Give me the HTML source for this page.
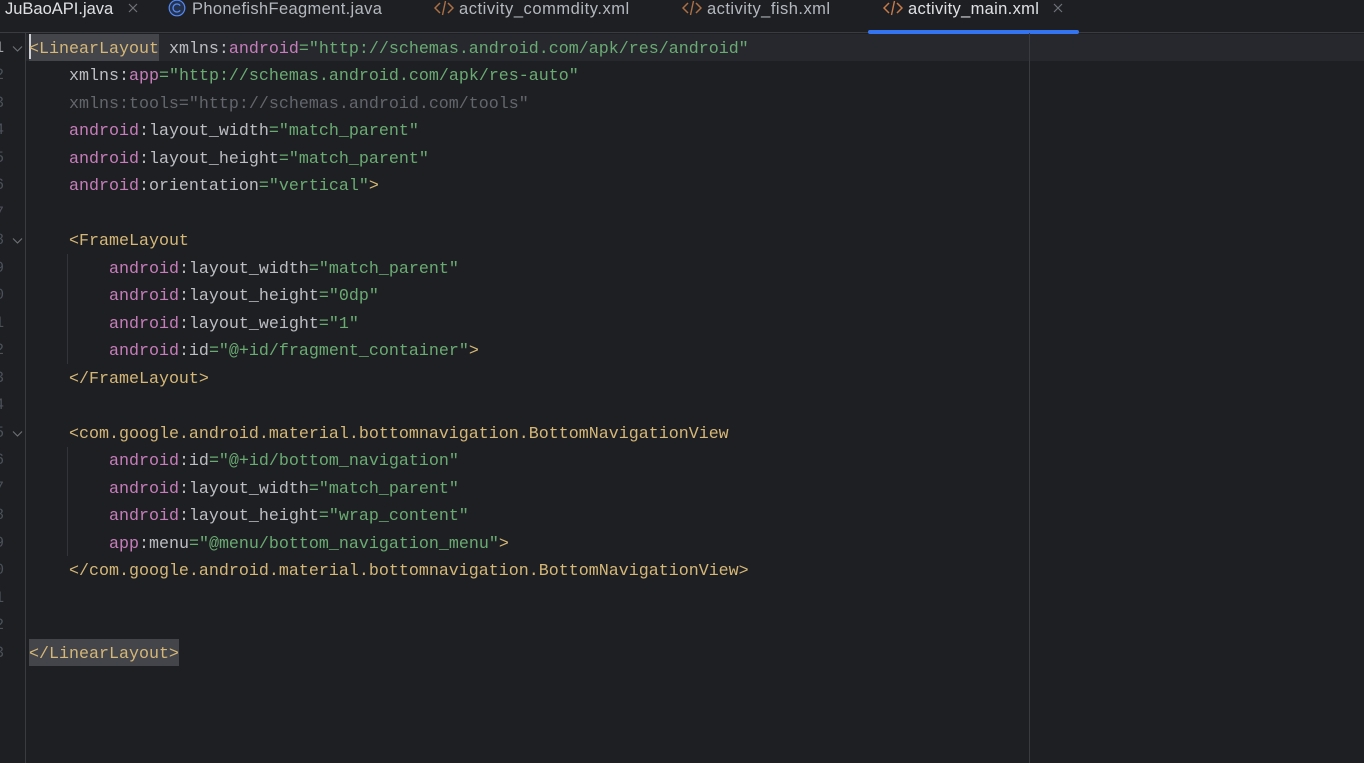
<!DOCTYPE html>
<html><head><meta charset="utf-8">
<style>
html,body{margin:0;padding:0;background:#1e1f22;}
#r{position:relative;width:1364px;height:763px;overflow:hidden;background:#1e1f22;}
.t{position:absolute;top:0;font:16.5px/18px "Liberation Sans",sans-serif;color:#b4b8bf;white-space:pre;}
.l{position:absolute;left:29px;font:16.67px/27px "Liberation Mono",monospace;color:#bcbec4;white-space:pre;letter-spacing:0;margin-top:2px;}
.n{position:absolute;right:1360px;font:15.5px/27px "Liberation Mono",monospace;color:#4b5059;white-space:pre;margin-top:1px;}
.a{position:absolute;background:#313438;width:1px;}
b{font-weight:normal}
.k{color:#d5b778}.p{color:#c77dbb}.s{color:#6aab73}.g{color:#63666d}.w{color:#bcbec4}
svg{position:absolute}
</style></head><body><div id="r">
<!-- tabs -->
<div class="t" style="left:5px;color:#dfe1e5">JuBaoAPI.java</div>
<div class="t" style="left:192px;letter-spacing:.35px">PhonefishFeagment.java</div>
<div class="t" style="left:459px;letter-spacing:.55px">activity_commdity.xml</div>
<div class="t" style="left:707px;letter-spacing:.47px">activity_fish.xml</div>
<div class="t" style="left:908px;color:#dfe1e5;letter-spacing:.33px">activity_main.xml</div>
<svg style="left:128px;top:3px" width="10" height="10" viewBox="0 0 10 10"><path d="M1 1L9 9M9 1L1 9" stroke="#6f737a" stroke-width="1.2"/></svg>
<svg style="left:1053px;top:3px" width="10" height="10" viewBox="0 0 10 10"><path d="M1 1L9 9M9 1L1 9" stroke="#6f737a" stroke-width="1.2"/></svg>
<svg style="left:168px;top:0" width="18" height="17" viewBox="0 0 18 17"><circle cx="9" cy="8" r="7.8" fill="#25324d" stroke="#548af7" stroke-width="1.2"/><path d="M12.2 5.6A4 4 0 1 0 12.2 10.4" fill="none" stroke="#548af7" stroke-width="1.3"/></svg>
<svg style="left:434px;top:0" width="20" height="16" viewBox="0 0 20 16"><path d="M6 3L1 8L6 13M14 3L19 8L14 13" fill="none" stroke="#ad6f45" stroke-width="1.5"/><path d="M11.5 1L8.5 15" fill="none" stroke="#ad6f45" stroke-width="1.4"/></svg>
<svg style="left:682px;top:0" width="20" height="16" viewBox="0 0 20 16"><path d="M6 3L1 8L6 13M14 3L19 8L14 13" fill="none" stroke="#ad6f45" stroke-width="1.5"/><path d="M11.5 1L8.5 15" fill="none" stroke="#ad6f45" stroke-width="1.4"/></svg>
<svg style="left:883px;top:0" width="20" height="16" viewBox="0 0 20 16"><path d="M6 3L1 8L6 13M14 3L19 8L14 13" fill="none" stroke="#c77a4a" stroke-width="1.5"/><path d="M11.5 1L8.5 15" fill="none" stroke="#c77a4a" stroke-width="1.4"/></svg>
<div style="position:absolute;left:0;top:32px;width:1364px;height:1px;background:#393b40"></div>
<div style="position:absolute;left:868px;top:30px;width:211px;height:4px;background:#3574f0;border-radius:2px"></div>
<!-- current line -->
<div style="position:absolute;left:26px;top:34px;width:1338px;height:27px;background:#26282e"></div>
<div style="position:absolute;left:29px;top:34px;width:130px;height:27px;background:#43454a"></div>
<div style="position:absolute;left:29px;top:639px;width:150px;height:27px;background:#43454a"></div>
<div style="position:absolute;left:29px;top:34px;width:2px;height:25px;background:#ced0d6"></div>
<!-- gutter, margin -->
<div style="position:absolute;left:25px;top:33px;width:1px;height:730px;background:#393b40"></div>
<div style="position:absolute;left:1029px;top:33px;width:1px;height:730px;background:#393b40"></div>
<!-- indent guides -->
<div class="a" style="left:67px;top:254px;height:110px"></div>
<div class="a" style="left:67px;top:447px;height:109px"></div>
<!-- folds -->
<svg style="left:12px;top:45px" width="11" height="8" viewBox="0 0 11 8"><path d="M1 1.5L5.5 6L10 1.5" fill="none" stroke="#6f737a" stroke-width="1.1"/></svg>
<svg style="left:12px;top:237px" width="11" height="8" viewBox="0 0 11 8"><path d="M1 1.5L5.5 6L10 1.5" fill="none" stroke="#6f737a" stroke-width="1.1"/></svg>
<svg style="left:12px;top:430px" width="11" height="8" viewBox="0 0 11 8"><path d="M1 1.5L5.5 6L10 1.5" fill="none" stroke="#6f737a" stroke-width="1.1"/></svg>
<!-- line numbers -->
<div class="n" style="top:34px;color:#a1a3ab;right:1360px">1</div>
<div class="n" style="top:61px">2</div>
<div class="n" style="top:89px">3</div>
<div class="n" style="top:116px">4</div>
<div class="n" style="top:144px">5</div>
<div class="n" style="top:171px">6</div>
<div class="n" style="top:199px">7</div>
<div class="n" style="top:226px">8</div>
<div class="n" style="top:254px">9</div>
<div class="n" style="top:281px">0</div>
<div class="n" style="top:309px">1</div>
<div class="n" style="top:336px">2</div>
<div class="n" style="top:364px">3</div>
<div class="n" style="top:391px">4</div>
<div class="n" style="top:419px">5</div>
<div class="n" style="top:446px">6</div>
<div class="n" style="top:474px">7</div>
<div class="n" style="top:501px">8</div>
<div class="n" style="top:529px">9</div>
<div class="n" style="top:556px">0</div>
<div class="n" style="top:584px">1</div>
<div class="n" style="top:611px">2</div>
<div class="n" style="top:639px">3</div>
<!-- code -->
<div class="l" style="top:34px"><b class="k">&lt;LinearLayout</b> xmlns:<b class="p">android</b><b class="s">="http://schemas.android.com/apk/res/android"</b></div>
<div class="l" style="top:61px">    xmlns:<b class="p">app</b><b class="s">="http://schemas.android.com/apk/res-auto"</b></div>
<div class="l" style="top:89px"><b class="g">    xmlns:tools="http://schemas.android.com/tools"</b></div>
<div class="l" style="top:116px">    <b class="p">android</b>:layout_width<b class="s">="match_parent"</b></div>
<div class="l" style="top:144px">    <b class="p">android</b>:layout_height<b class="s">="match_parent"</b></div>
<div class="l" style="top:171px">    <b class="p">android</b>:orientation<b class="s">="vertical"</b><b class="k">&gt;</b></div>
<div class="l" style="top:226px">    <b class="k">&lt;FrameLayout</b></div>
<div class="l" style="top:254px">        <b class="p">android</b>:layout_width<b class="s">="match_parent"</b></div>
<div class="l" style="top:281px">        <b class="p">android</b>:layout_height<b class="s">="0dp"</b></div>
<div class="l" style="top:309px">        <b class="p">android</b>:layout_weight<b class="s">="1"</b></div>
<div class="l" style="top:336px">        <b class="p">android</b>:id<b class="s">="@+id/fragment_container"</b><b class="k">&gt;</b></div>
<div class="l" style="top:364px">    <b class="k">&lt;/FrameLayout&gt;</b></div>
<div class="l" style="top:419px">    <b class="k">&lt;com.google.android.material.bottomnavigation.BottomNavigationView</b></div>
<div class="l" style="top:446px">        <b class="p">android</b>:id<b class="s">="@+id/bottom_navigation"</b></div>
<div class="l" style="top:474px">        <b class="p">android</b>:layout_width<b class="s">="match_parent"</b></div>
<div class="l" style="top:501px">        <b class="p">android</b>:layout_height<b class="s">="wrap_content"</b></div>
<div class="l" style="top:529px">        <b class="p">app</b>:menu<b class="s">="@menu/bottom_navigation_menu"</b><b class="k">&gt;</b></div>
<div class="l" style="top:556px">    <b class="k">&lt;/com.google.android.material.bottomnavigation.BottomNavigationView&gt;</b></div>
<div class="l" style="top:639px"><b class="k">&lt;/LinearLayout&gt;</b></div>
</div></body></html>
